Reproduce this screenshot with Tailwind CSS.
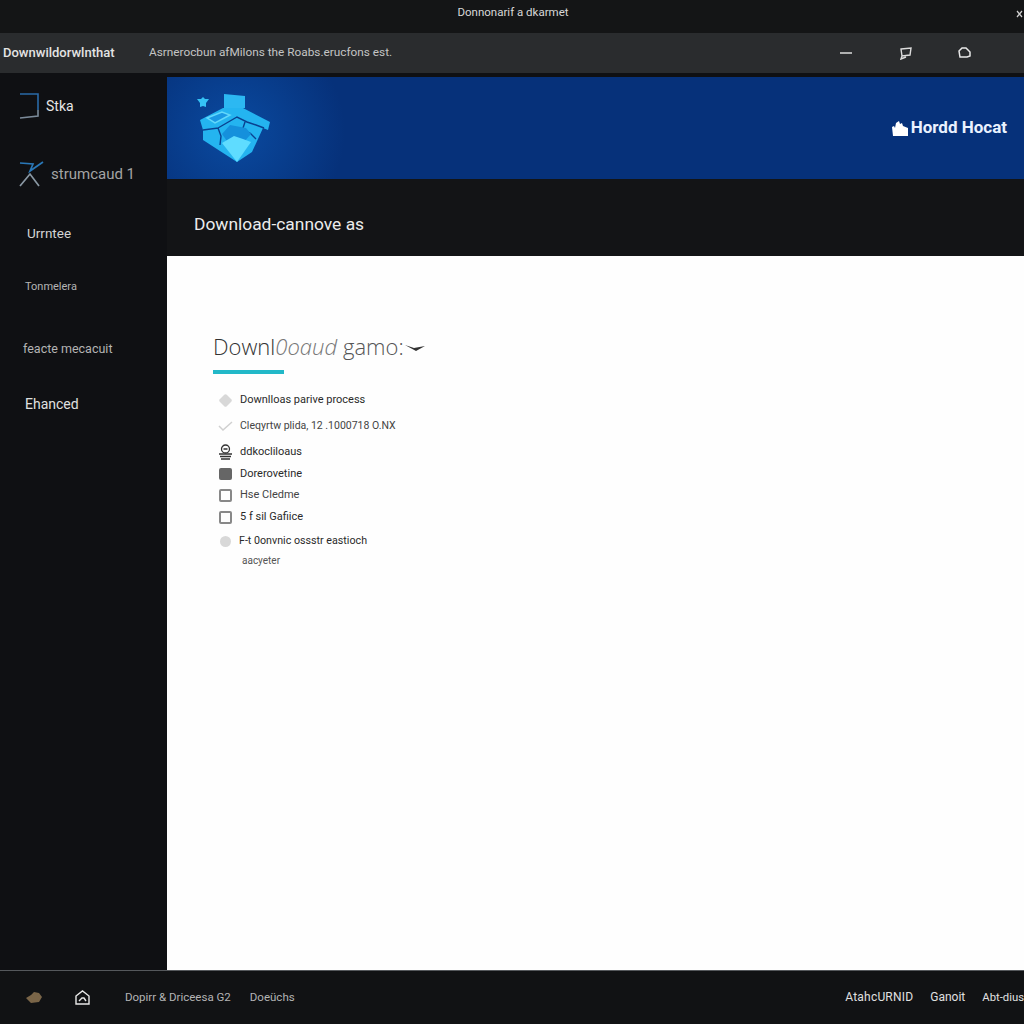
<!DOCTYPE html>
<html lang="en">
<head>
    <meta charset="UTF-8">
    <meta name="viewport" content="width=device-width, initial-scale=1.0">
    <title>Download manager</title>
    <script src="https://cdn.jsdelivr.net/npm/@tailwindcss/browser@4"></script>
</head>
<body class="bg-[#0f1013] text-white font-['Roboto','Liberation_Sans',sans-serif] h-[1024px] w-[1024px] overflow-hidden flex flex-col">

    <!-- title bar -->
    <div class="h-[33px] bg-[#141516] flex items-center relative shrink-0">
        <div class="flex-1 text-center text-[11.5px] text-[#d8d8d8] pl-[2px] pb-[7px]">Donnonarif a dkarmet</div>
        <svg class="absolute right-[1px] top-[10px]" width="7" height="8" viewBox="0 0 7 8" fill="none" stroke="#d0d0d0" stroke-width="1.2"><path d="M1 1l5 6M6 1L1 7"/></svg>
    </div>

    <!-- toolbar -->
    <div class="h-[40px] bg-[#2a2c2e] flex items-center shrink-0 pl-[3px]">
        <span class="w-[146px] text-[13px] font-medium text-[#e4e4e4]">Downwildorwlnthat</span>
        <span class="text-[11.8px] text-[#c4c4c4]">Asrnerocbun afMilons the Roabs.erucfons est.</span>
        <div class="ml-auto flex items-center gap-[46px] pr-[53px]">
            <svg class="mr-[2px]" width="12" height="4" viewBox="0 0 12 4"><path d="M0 2h12" stroke="#dcdcdc" stroke-width="1.5"/></svg>
            <svg width="12" height="14" viewBox="0 0 12 14" fill="none" stroke="#dcdcdc" stroke-width="1.4"><path d="M1 3l10-1-1 7-8 1zM2 10l-1 3 5-2"/></svg>
            <svg width="13" height="12" viewBox="0 0 13 12" fill="none" stroke="#e8e8e8" stroke-width="1.5"><path d="M1 4l3-3h4l4 4v4l-3 1H2z"/></svg>
        </div>
    </div>

    <div class="flex flex-1 min-h-0">
        <!-- sidebar -->
        <aside class="w-[167px] shrink-0 bg-[#0f1013] flex flex-col text-[#d4d4d4]">
            <div class="flex items-center mt-[21px] pl-[19px] gap-[7px] h-[24px]">
                <svg width="20" height="26" viewBox="0 0 20 26" fill="none" stroke-width="1.6"><path d="M1 1h18v16" stroke="#2a6aa8"/><path d="M19 17v6L1 25" stroke="#7b8a99"/></svg>
                <span class="text-[14px] text-[#e6e6e6]">Stka</span>
            </div>
            <div class="flex items-center mt-[43px] pl-[19px] gap-[7px] h-[26px]">
                <svg width="25" height="26" viewBox="0 0 25 26" fill="none" stroke-width="1.7"><path d="M1 2l13 1-3 7L24 1" stroke="#2a78b8"/><path d="M1 25l10-12 9 12" stroke="#8a98a4"/></svg>
                <span class="text-[15px] text-[#a4a4a4]">strumcaud 1</span>
            </div>
            <div class="mt-[37px] pl-[27px] text-[13.5px] leading-[18px]">Urrntee</div>
            <div class="mt-[37px] pl-[25px] text-[11px] leading-[16px] text-[#b4b4b4]">Tonmelera</div>
            <div class="mt-[46px] pl-[23px] text-[12.5px] leading-[16px] text-[#b4b4b4]">feacte mecacuit</div>
            <div class="mt-[37px] pl-[25px] text-[14px] leading-[20px] text-[#e0e0e0]">Ehanced</div>
        </aside>

        <main class="flex-1 min-w-0 flex flex-col">
            <!-- banner -->
            <div class="mt-[4px] h-[102px] bg-[#06317a] bg-[radial-gradient(circle_at_68px_55px,#0a4aa0_0,#06317a_110px)] flex items-center justify-between pl-[30px] pr-[17px] shrink-0">
                <svg width="78" height="70" viewBox="0 0 78 70">
                    <path d="M0 6l4 0 2-2 2 2 4 0-3 4 0 4-3-1-3 1 0-4z" fill="#35c2f5"/>
                    <path d="M27 1l21 2v12H27z" fill="#2cb8f2"/>
                    <path d="M3 27L26 15h20l27 14-2 8-5-2-11 24-15 10L6 47V37z" fill="#24b4f0"/>
                    <path d="M10 25l15-6 8 3-15 8z" fill="#1a98e4" stroke="#62d8fb" stroke-width="1.500"/>
                    <path d="M6 37l15-2 3 8-1 9M21 35L40 24l10 5 9 3 8 3M48 29l-3 9 8 2M53 40l6 6" fill="none" stroke="#0a4190" stroke-width="1.400"/>
                    <path d="M25 41l8-9 16 3 5 6-8 9-14 1z" fill="#1590dc"/>
                    <path d="M25 50l12-7 9 3 8 3-14 20z" fill="#5fdcff"/>
                </svg>
                <div class="flex items-center gap-[3px] font-bold text-[17px] text-[#eaf2ff]">
                    <svg width="16" height="15" viewBox="0 0 16 15" fill="#fff"><path d="M0 6l2-1 1 2 1-5 3-2 1 3 2-1 1 3 5 2v8H1z"/></svg>
                    <span>Hordd Hocat</span>
                </div>
            </div>
            <!-- section header -->
            <div class="h-[77px] bg-[#131416] flex items-center pl-[27px] pt-[14px] text-[17.4px] text-[#ececec] shrink-0">Download-cannove as</div>
            <!-- content -->
            <div class="flex-1 bg-[#fefefe] pl-[46px] pt-[75px] text-[#2a2a2a]">
                <h1 class="text-[22px] leading-[30px] font-['Open_Sans','Liberation_Sans',sans-serif] font-light text-[#333] flex items-center">Downl<span class="italic text-[#777]">0oaud</span><span class="ml-[6px] text-[#555]">gamo:</span><svg width="20" height="7" viewBox="0 0 20 7" class="ml-[1px] mt-[3px]"><path d="M0 1l9 3 11-2-9 5z" fill="#333"/></svg></h1>
                <div class="mt-[9px] w-[71px] h-[4px] bg-[#22b8c8]"></div>
                <ul class="mt-[18px] text-[11px] leading-[16px]">
                    <li class="flex items-center h-[16px]">
                        <span class="w-[27px] flex pl-[7px]"><span class="w-[11px] h-[11px] rounded-[2px] rotate-45 scale-90 bg-[#d8d8d8]"></span></span>Downlloas parive process
                    </li>
                    <li class="flex items-center h-[16px] mt-[10px] text-[10.500px] text-[#444]">
                        <span class="w-[27px] pl-[5px]"><svg width="15" height="10" viewBox="0 0 15 10" fill="none" stroke="#d0d0d0" stroke-width="1.5"><path d="M1 5l4 4 9-8"/></svg></span>Cleqyrtw plida, 12 .1000718 O.NX
                    </li>
                    <li class="flex items-center h-[16px] mt-[10px]">
                        <span class="w-[27px] pl-[5px]"><svg width="15" height="16" viewBox="0 0 15 16" fill="none" stroke="#333" stroke-width="1.3"><circle cx="7.500" cy="5" r="4"/><path d="M5.500 5h4M1 10h13M2 12.500h11M3 15h9"/></svg></span>ddkocliloaus
                    </li>
                    <li class="flex items-center h-[16px] mt-[6px]">
                        <span class="w-[27px] pl-[6px]"><span class="block w-[13px] h-[12px] rounded-[2px] bg-[#666]"></span></span>Dorerovetine
                    </li>
                    <li class="flex items-center h-[16px] mt-[5px] text-[#444]">
                        <span class="w-[27px] pl-[6px]"><span class="block w-[13px] h-[13px] rounded-[2px] border-2 border-[#888]"></span></span>Hse Cledme
                    </li>
                    <li class="flex items-center h-[16px] mt-[6px]">
                        <span class="w-[27px] pl-[6px]"><span class="block w-[13px] h-[13px] rounded-[2px] border-2 border-[#888]"></span></span>5 f sil Gafiice
                    </li>
                    <li class="flex items-center h-[16px] mt-[8px] text-[10.700px]">
                        <span class="w-[26px] pl-[7px]"><span class="block w-[11px] h-[11px] rounded-full bg-[#d8d8d8]"></span></span>F-t 0onvnic ossstr eastioch
                    </li>
                    <li class="h-[16px] mt-[4px] pl-[29px] text-[10px] text-[#555]">aacyeter</li>
                </ul>
            </div>
        </main>
    </div>

    <!-- footer -->
    <footer class="h-[54px] bg-[#111214] border-t border-[#55585c] flex items-center shrink-0 text-[11.500px] text-[#b4b4b4]">
        <svg class="ml-[26px]" width="16" height="11" viewBox="0 0 16 11"><path d="M0 6l5-3 3-3 5 1 3 4-3 5-8 1z" fill="#7a6548"/></svg>
        <svg class="ml-[33px]" width="15" height="15" viewBox="0 0 15 15" fill="none" stroke="#e8e8e8" stroke-width="1.4"><path d="M1 6l6.500-5L14 6v8H1zM4 11l3-3h2l2 3"/></svg>
        <span class="ml-[35px]">Dopirr &amp; Driceesa G2</span>
        <span class="ml-[19px]">Doeüchs</span>
        <div class="ml-auto flex items-baseline gap-[17px] text-[#e0e0e0] text-[12px]">
            <span class="tracking-[0.2px]">AtahcURNID</span><span>Ganoit</span><span class="text-[11.300px]">Abt-dius</span>
        </div>
    </footer>

</body>
</html>
